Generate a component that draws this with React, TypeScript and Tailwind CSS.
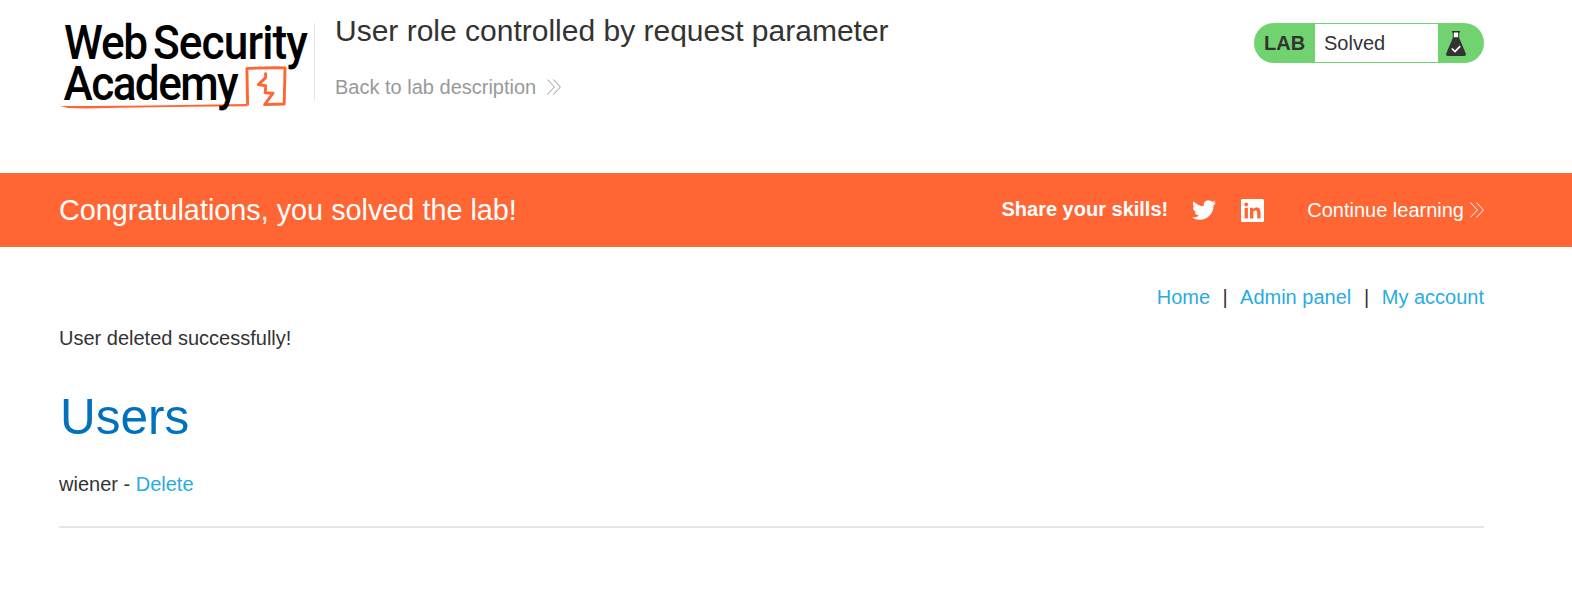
import React from "react";

function Logo() {
  return (
    <svg
      width="254"
      height="92"
      viewBox="60 20 254 92"
      className="shrink-0 overflow-visible"
      fontFamily="Roboto, 'Liberation Sans', sans-serif"
      fontWeight="500"
      fontSize="48"
    >
      <path d="M60 106 L90 106 L150 105.6 L246.5 103.9 L247.5 106.2 L190 106.8 L120 107.8 L85 108.6 L68 108Z" fill="#ff6633" />
      <path
        d="M247.6 105.4 L246.9 68.4 Q266 67.6 285 67.9 L284.2 104 L264.6 104.6 L273 93.2 L265.2 92.8 L265.6 85.8 L258.4 84.6 L265.6 77.6 L265.6 72.5"
        fill="none"
        stroke="#ff6633"
        strokeWidth="2.9"
        strokeLinejoin="round"
      />
      <g fill="#000" transform="scale(0.92 1)">
        <text x="69.6" y="59" textLength="91.3" lengthAdjust="spacing">Web</text>
        <text x="166.3" y="59" textLength="168.5" lengthAdjust="spacing">Security</text>
        <text x="69" y="99.7" textLength="190.5" lengthAdjust="spacing">Academy</text>
      </g>
    </svg>
  );
}

function Chevrons() {
  return (
    <svg width="14" height="16" viewBox="0 0 14 16" fill="none" stroke="currentColor" strokeWidth="1" className="shrink-0">
      <path d="M0.4 0.5 L7.4 8 L0.4 15.5 M6.4 0.5 L13.4 8 L6.4 15.5" />
    </svg>
  );
}

function Flask() {
  return (
    <svg width="20" height="26" viewBox="0 0 20 26">
      <path d="M7 1 H13 V8 H7Z" fill="#fff" />
      <path d="M6 0 H14 V1.4 H13.2 V7 L19.8 22.4 Q20.2 25 18 25 H2 Q-0.2 25 0.2 22.4 L6.8 7 V1.4 H6Z M7.8 1.4 V6.2 H12.2 V1.4Z" fill="#333332" fillRule="evenodd" />
      <path d="M5.8 17.5 L9 20.5 L14.2 15.2" fill="none" stroke="#fff" strokeWidth="1.7" />
    </svg>
  );
}

function Twitter() {
  return (
    <svg width="24" height="24" viewBox="0 0 24 24" fill="#fff">
      <path d="M23.953 4.57a10 10 0 01-2.825.775 4.958 4.958 0 002.163-2.723c-.951.555-2.005.959-3.127 1.184a4.92 4.92 0 00-8.384 4.482C7.69 8.095 4.067 6.13 1.64 3.162a4.822 4.822 0 00-.666 2.475c0 1.71.87 3.213 2.188 4.096a4.904 4.904 0 01-2.228-.616v.06a4.923 4.923 0 003.946 4.827 4.996 4.996 0 01-2.212.085 4.936 4.936 0 004.604 3.417 9.867 9.867 0 01-6.102 2.105c-.39 0-.779-.023-1.17-.067a13.995 13.995 0 007.557 2.209c9.053 0 13.998-7.496 13.998-13.985 0-.21 0-.42-.015-.63A9.935 9.935 0 0024 4.59z" />
    </svg>
  );
}

function LinkedIn() {
  return (
    <svg width="23" height="23" viewBox="0 0 23 23">
      <rect width="23" height="23" rx="1.5" fill="#fff" />
      <g fill="#ff6633">
        <circle cx="5.2" cy="5.5" r="1.9" />
        <path d="M3.6 8.8 H6.9 V19.5 H3.6Z" />
        <path d="M9 8.8 H12.1 V10.3 C12.9 9.1 14.1 8.6 15.4 8.6 C18.6 8.6 19.5 10.7 19.5 13.6 V19.5 H16.2 V14.3 C16.2 12.8 15.9 11.5 14.4 11.5 C12.8 11.5 12.3 12.8 12.3 14.3 V19.5 H9Z" />
      </g>
    </svg>
  );
}

export default function App() {
  return (
    <div className="h-[616px] w-[1572px] overflow-hidden bg-white font-['Liberation_Sans',Arial,sans-serif] text-[20px] leading-[30px] text-[#333332]">
      <header className="flex h-[173px] items-start pl-[60px] pr-[88px]">
        <div className="pt-5">
          <Logo />
        </div>
        <div className="mt-[23px] h-[78px] w-px bg-[#e5e5e5]" />
        <div className="ml-5 pt-[11px]">
          <h1 className="text-[30px] leading-[40px]">User role controlled by request parameter</h1>
          <a className="mt-[21px] flex items-center gap-[11px] text-[#999]">
            Back to lab description
            <Chevrons />
          </a>
        </div>
        <div className="ml-auto mt-[23px] flex h-10 w-[230px] items-center overflow-hidden rounded-[20px] bg-[#71d36f]">
          <span className="w-[61px] pl-[10px] font-bold">LAB</span>
          <span className="h-[38px] w-[123px] bg-white pl-[9px] leading-[38px]">Solved</span>
          <span className="pl-2 pt-px">
            <Flask />
          </span>
        </div>
      </header>

      <section className="flex h-[74px] items-center bg-[#ff6633] pl-[59px] pr-[88px] text-white">
        <p className="text-[28.8px]">Congratulations, you solved the lab!</p>
        <div className="ml-auto flex items-center">
          <span className="pb-[2px] font-bold">Share your skills!</span>
          <span className="ml-6">
            <Twitter />
          </span>
          <span className="ml-[25px]">
            <LinkedIn />
          </span>
          <a className="ml-[43px] flex items-center gap-[6px]">
            Continue learning
            <Chevrons />
          </a>
        </div>
      </section>

      <main className="pl-[59px] pr-[88px] pt-[35px]">
        <nav className="flex justify-end text-[#29abe2]">
          <a>Home</a>
          <span className="w-[30px] text-center text-[#333332]">|</span>
          <a>Admin panel</a>
          <span className="w-[30.5px] text-center text-[#333332]">|</span>
          <a>My account</a>
        </nav>
        <p className="mt-[11px]">User deleted successfully!</p>
        <h2 className="mt-[34px] pl-px text-[49.5px] leading-[60px] text-[#0071bc]">Users</h2>
        <p className="mt-[22px]">
          wiener - <a className="text-[#29abe2]">Delete</a>
        </p>
        <hr className="mt-[27px] border-0 border-t-2 border-solid border-[#e5e5e5]" />
      </main>
    </div>
  );
}
